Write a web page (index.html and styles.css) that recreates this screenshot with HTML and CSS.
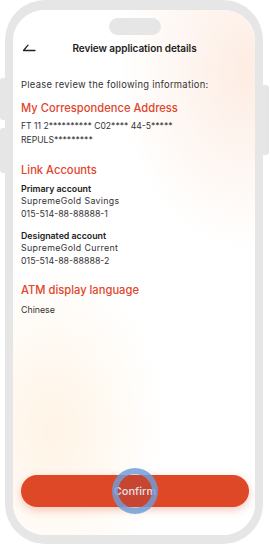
FILE: index.html
```html
<!DOCTYPE html>
<html lang="en">
<head>
<meta charset="utf-8">
<title>Review application details</title>
<link rel="stylesheet" href="styles.css">
</head>
<body>
<div class="device">
  <span class="side-btn left-a"></span>
  <span class="side-btn left-b"></span>
  <span class="side-btn right-a"></span>
  <div class="screen">
    <div class="notch"></div>
    <header class="topbar">
      <svg class="back" width="14" height="8" viewBox="0 0 14 8" aria-hidden="true">
        <path d="M6 1.2 L1.5 6.5 L13 6.5" fill="none" stroke="#222" stroke-width="1.3" stroke-linecap="round" stroke-linejoin="round"/>
      </svg>
      <h1 class="title">Review application details</h1>
    </header>
    <main class="content">
      <p class="intro">Please review the following information:</p>
      <h2 class="sec sec-first">My Correspondence Address</h2>
      <p class="addr">FT 11 2********** C02**** 44-5*****<br>REPULS*********</p>
      <h2 class="sec">Link Accounts</h2>
      <div class="acct">
        <div class="label">Primary account</div>
        <div class="wide">SupremeGold Savings</div>
        <div>015-514-88-88888-1</div>
      </div>
      <div class="acct acct-2">
        <div class="label">Designated account</div>
        <div class="wide">SupremeGold Current</div>
        <div>015-514-88-88888-2</div>
      </div>
      <h2 class="sec">ATM display language</h2>
      <p class="lang">Chinese</p>
    </main>
    <div class="actions">
      <button class="confirm"><span class="label-text">Confirm</span><span class="touch"></span></button>
    </div>
  </div>
</div>
</body>
</html>
```
FILE: styles.css
```css
* { box-sizing: border-box; }
html, body { margin: 0; padding: 0; }
body {
  width: 270px;
  height: 544px;
  background: #ffffff;
  font-family: Inter, "Noto Sans", sans-serif;
  color: #333;
  overflow: hidden;
}
.device {
  position: relative;
  margin-left: 5px;
  width: 258px;
  height: 544px;
  border-style: solid;
  border-color: #e6e6e6;
  border-width: 10px 8px 9px 8px;
  border-radius: 40px;
}
.side-btn {
  position: absolute;
  background: #e6e6e6;
  width: 6px;
}
.left-a { left: -13px; top: 68px; height: 42px; border-radius: 3px 0 0 3px; }
.left-b { left: -13px; top: 118px; height: 45px; border-radius: 3px 0 0 3px; }
.right-a { right: -14px; top: 75px; height: 70px; border-radius: 0 3px 3px 0; }
.screen {
  height: 100%;
  border-radius: 32px;
  overflow: hidden;
  display: flex;
  flex-direction: column;
  padding: 0 7px 0 8px;
  background:
    radial-gradient(ellipse 130px 180px at 235px 60px, rgba(252, 224, 208, 0.6), rgba(252, 224, 208, 0) 100%),
    radial-gradient(ellipse 110px 170px at 40px 420px, rgba(255, 236, 212, 0.6), rgba(255, 236, 212, 0) 100%),
    #ffffff;
}
.notch {
  align-self: center;
  width: 52px;
  height: 17px;
  margin-top: 8px;
  border-radius: 9px;
  background: #e6e6e6;
}
.topbar {
  position: relative;
  height: 20px;
  margin-top: 3px;
  display: flex;
  align-items: center;
  justify-content: center;
}
.back {
  position: absolute;
  left: 1px;
  top: 6px;
}
.title {
  margin: 0;
  font-size: 10px;
  font-weight: 600;
  color: #1c1c1c;
  letter-spacing: -0.05px;
}
.content { flex: 1; }
.intro {
  margin: 19.5px 0 0;
  font-size: 9.4px;
  line-height: 13px;
  letter-spacing: 0.28px;
  color: #333;
}
.sec {
  margin: 15px 0 0;
  font-size: 11.2px;
  line-height: 16px;
  font-weight: 500;
  color: #e2452c;
}
.sec-first { margin-top: 9.5px; }
.addr {
  margin: 3px 0 0;
  font-size: 8.6px;
  line-height: 14px;
  color: #333;
}
.acct {
  margin-top: 4.75px;
  font-size: 8.8px;
  line-height: 12.5px;
  color: #333;
}
.wide { letter-spacing: 0.35px; }
.acct-2 { margin-top: 9.5px; }
.label { font-weight: 600; color: #222; }
.lang {
  margin: 4.5px 0 0;
  font-size: 8.8px;
  line-height: 13px;
  color: #333;
}
.actions {
  padding-bottom: 28px;
}
.confirm {
  position: relative;
  display: block;
  width: 228px;
  height: 32px;
  border: none;
  border-radius: 16px;
  background: #df4827;
  color: #fff;
  font-family: inherit;
  font-size: 11px;
  font-weight: 500;
  box-shadow: 0 3px 8px rgba(223, 72, 39, 0.3);
}
.label-text { position: relative; }
.touch {
  position: absolute;
  left: 91px;
  top: -7px;
  width: 46px;
  height: 46px;
  border-radius: 50%;
  border: 6px solid rgba(110, 160, 222, 0.8);
  background: rgba(70, 60, 110, 0.15);
}
```
